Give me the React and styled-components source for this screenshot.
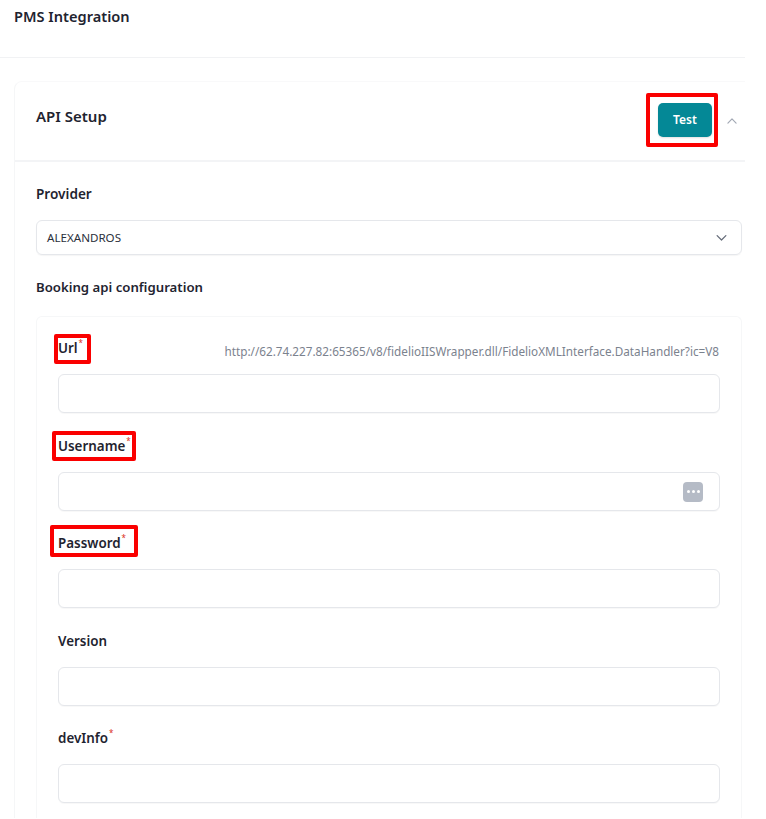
import React from 'react'
import styled, { createGlobalStyle } from 'styled-components'

const GlobalStyle = createGlobalStyle`
  html, body {
    margin: 0;
    padding: 0;
    background: #fff;
    overflow: hidden;
  }
  body {
    font-family: "Noto Sans", "Open Sans", sans-serif;
    color: #1f2430;
  }
`

const Page = styled.div`
  width: 766px;
  height: 819px;
  overflow: hidden;
  background: #fff;
`

const TopBar = styled.div`
  width: 745px;
  height: 58px;
  box-sizing: border-box;
  padding: 6px 0 0 14px;
  border-bottom: 1px solid #f1f2f4;
`

const PageTitle = styled.h1`
  margin: 0;
  font-size: 14.6px;
  line-height: 20px;
  font-weight: 600;
  color: #1f2430;
`

const Card = styled.section`
  width: 731px;
  box-sizing: border-box;
  margin: 23px 0 0 14px;
  border-left: 1px solid #f5f6f7;
  border-top: 1px solid #f9f9fa;
  border-top-left-radius: 8px;
`

const CardHeader = styled.header`
  height: 80px;
  box-sizing: border-box;
  display: flex;
  align-items: center;
  padding: 0 6px 0 21px;
  border-bottom: 2px solid #f3f4f6;
`

const CardTitle = styled.h2`
  margin: 0 0 10px;
  flex: 1;
  font-size: 15px;
  line-height: 22px;
  font-weight: 600;
  color: #1f2430;
`

const Marked = styled.span`
  position: relative;
  display: inline-flex;
`

const RedBox = styled.span`
  position: absolute;
  top: ${p => p.$top}px;
  left: ${p => p.$left}px;
  width: ${p => p.$w}px;
  height: ${p => p.$h}px;
  box-sizing: border-box;
  border: 4px solid #fa0000;
  border-radius: 2px;
  pointer-events: none;
`

const TestButton = styled.button`
  width: 54px;
  height: 34px;
  margin: 0 0 3px;
  padding: 0;
  border: 0;
  border-radius: 5px;
  background: #048896;
  box-shadow: 0 1px 2px rgba(0, 0, 0, 0.12);
  color: #fff;
  font: 600 12px "Noto Sans", sans-serif;
`

const Chevron = styled.svg`
  display: block;
  flex: none;
  width: ${p => p.$size}px;
  height: ${p => p.$size}px;
  fill: none;
  stroke: ${p => p.$color};
  stroke-width: 2;
  stroke-linecap: round;
  stroke-linejoin: round;
`

const ToggleIcon = styled.span`
  margin: 0 0 0 13px;
  padding-bottom: 1px;
`

const CardBody = styled.div`
  padding: 22px 3px 0 21px;
`

const SectionLabel = styled.div`
  font-size: ${p => p.$size || 13.6}px;
  line-height: 20px;
  font-weight: 600;
  color: #1f2430;
`

const SelectBox = styled.div`
  height: 35px;
  box-sizing: border-box;
  margin-top: 16px;
  padding: 0 12px 1px 10px;
  display: flex;
  align-items: center;
  justify-content: space-between;
  border: 1px solid #e5e7eb;
  border-radius: 6px;
  box-shadow: 0 1px 1px rgba(0, 0, 0, 0.04);
  font-size: 11.6px;
  color: #2b303b;
`

const ConfigLabel = styled(SectionLabel)`
  margin-top: 22px;
`

const ConfigCard = styled.div`
  margin-top: 19px;
  padding: 13px 21px 0 21px;
  border: 1px solid #f6f7f8;
  border-bottom: 0;
  border-radius: 6px 6px 0 0;
`

const Field = styled.div`
  height: 97.5px;
`

const FieldHead = styled.div`
  height: 44px;
  display: flex;
  align-items: flex-start;
  justify-content: space-between;
`

const FieldLabel = styled.label`
  font-size: 13.4px;
  line-height: 20px;
  font-weight: 600;
  color: #1f2430;
  margin-top: 8px;
  position: relative;
  display: inline-block;
`

const Star = styled.sup`
  position: absolute;
  left: 100%;
  top: 0;
  margin-left: 1px;
  font-size: 8px;
  line-height: 9px;
  font-weight: 400;
  color: #d92d20;
`

const Hint = styled.span`
  margin: 12px 1px 0 0;
  font-size: 11.72px;
  line-height: 18px;
  color: #7b828e;
  white-space: nowrap;
`

const InputWrap = styled.div`
  position: relative;
`

const Input = styled.input`
  display: block;
  width: 100%;
  height: 39px;
  box-sizing: border-box;
  border: 1px solid #e5e7eb;
  border-radius: 6px;
  box-shadow: 0 1px 1px rgba(0, 0, 0, 0.03);
  background: #fff;
  outline: none;
`

const KeyBadge = styled.span`
  position: absolute;
  top: 10px;
  right: 17px;
  width: 20px;
  height: 20px;
  border-radius: 4px;
  background: #b5bbc6;
  display: flex;
  align-items: center;
  justify-content: center;
  gap: 2px;
`

const Dot = styled.i`
  width: 3px;
  height: 3px;
  border-radius: 50%;
  background: #fff;
`

const fields = [
  { label: 'Url', required: true, hint: 'http://62.74.227.82:65365/v8/fidelioIISWrapper.dll/FidelioXMLInterface.DataHandler?ic=V8', box: { $top: -4, $left: -4, $w: 37, $h: 30 } },
  { label: 'Username', required: true, badge: true, box: { $top: -5, $left: -6, $w: 84, $h: 30 } },
  { label: 'Password', required: true, box: { $top: -8, $left: -8, $w: 88, $h: 32 } },
  { label: 'Version' },
  { label: 'devInfo', required: true }
]

export default function App() {
  return (
    <Page>
      <GlobalStyle />
      <TopBar>
        <PageTitle>PMS Integration</PageTitle>
      </TopBar>
      <Card>
        <CardHeader>
          <CardTitle>API Setup</CardTitle>
          <Marked>
            <TestButton>Test</TestButton>
            <RedBox $top={-10} $left={-12} $w={72} $h={54} />
          </Marked>
          <ToggleIcon>
            <Chevron $size={14} $color="#a2a8b4" viewBox="0 0 24 24">
              <path d="M5 15.5l7-7 7 7" />
            </Chevron>
          </ToggleIcon>
        </CardHeader>
        <CardBody>
          <SectionLabel>Provider</SectionLabel>
          <SelectBox>
            ALEXANDROS
            <Chevron $size={15} $color="#656c79" viewBox="0 0 24 24">
              <path d="M5 9l7 7 7-7" />
            </Chevron>
          </SelectBox>
          <ConfigLabel $size={13.2}>Booking api configuration</ConfigLabel>
          <ConfigCard>
            {fields.map(f => (
              <Field key={f.label}>
                <FieldHead>
                  <FieldLabel>
                    {f.label}
                    {f.required && <Star>*</Star>}
                    {f.box && <RedBox {...f.box} />}
                  </FieldLabel>
                  {f.hint && <Hint>{f.hint}</Hint>}
                </FieldHead>
                <InputWrap>
                  <Input />
                  {f.badge && (
                    <KeyBadge>
                      <Dot />
                      <Dot />
                      <Dot />
                    </KeyBadge>
                  )}
                </InputWrap>
              </Field>
            ))}
          </ConfigCard>
        </CardBody>
      </Card>
    </Page>
  )
}
